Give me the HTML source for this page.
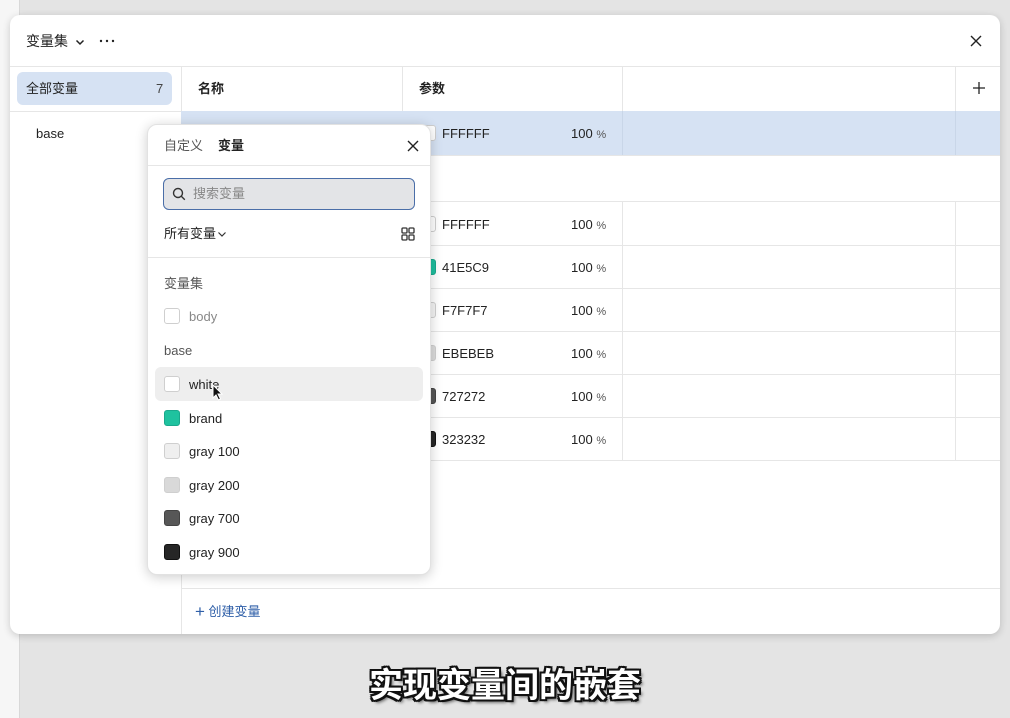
<!DOCTYPE html>
<html><head><meta charset="utf-8"><style>
*{box-sizing:border-box;margin:0;padding:0}
body{width:1010px;height:718px;overflow:hidden;background:#e4e4e4;font-family:"Liberation Sans","Noto Sans CJK SC",sans-serif;position:relative;color:#222}
.a{position:absolute}
.ruler{left:0;top:0;width:20px;height:718px;background:#f6f6f6;border-right:1px solid #d8d8d8}
.modal{left:10px;top:15px;width:990px;height:619px;background:#fff;border-radius:10px;box-shadow:0 2px 8px rgba(0,0,0,.18);overflow:hidden}
.t{font-size:13px;line-height:16px;white-space:nowrap}
.hl{background:#eeeeee}
.vl{width:1px;background:#e6e6e6}
.hr{height:1px;background:#e6e6e6}
.sw{width:16px;height:16px;border-radius:3px;border:1px solid #cfcfcf}
.pct{font-size:11px;color:#555}
.pop{left:147px;top:124px;width:284px;height:451px;background:#fff;border-radius:10px;box-shadow:0 2px 12px rgba(0,0,0,.2);border:1px solid #e2e2e2}
.sub{left:0;width:1010px;top:660px;text-align:center;font-size:34px;line-height:46px;color:#fff;font-family:"Noto Sans CJK SC",sans-serif;font-weight:bold;text-shadow:-2px -2px 0 #111,2px -2px 0 #111,-2px 2px 0 #111,2px 2px 0 #111,0 2px 0 #111,0 -2px 0 #111,2px 0 0 #111,-2px 0 0 #111,3px 3px 3px rgba(0,0,0,.6)}
</style></head><body>
<div class="a ruler"></div>
<div class="a modal">
  <div class="a t" style="left:16px;top:18px;font-size:14px">变量集</div>
  <svg class="a" style="left:64px;top:21px" width="12" height="12" viewBox="0 0 12 12"><path d="M2.5 4.5L6 8l3.5-3.5" stroke="#222" stroke-width="1.5" fill="none"/></svg>
  <svg class="a" style="left:89px;top:24px" width="16" height="4" viewBox="0 0 16 4"><circle cx="2" cy="2" r="1.2" fill="#222"/><circle cx="8" cy="2" r="1.2" fill="#222"/><circle cx="14" cy="2" r="1.2" fill="#222"/></svg>
  <svg class="a" style="left:959px;top:19px" width="14" height="14" viewBox="0 0 14 14"><path d="M2 2l10 10M12 2L2 12" stroke="#222" stroke-width="1.4"/></svg>
  <div class="a hr" style="left:0;top:51px;width:990px"></div>
  <div class="a" style="left:7px;top:57px;width:155px;height:33px;background:#d6e2f3;border-radius:6px"></div>
  <div class="a t" style="left:16px;top:66px">全部变量</div>
  <div class="a t" style="left:146px;top:66px;color:#444">7</div>
  <div class="a hr" style="left:0;top:96px;width:171px"></div>
  <div class="a t" style="left:26px;top:111px">base</div>
  <div class="a vl" style="left:171px;top:51px;height:568px"></div>
  <div class="a t" style="left:188px;top:66px;font-weight:bold">名称</div>
  <div class="a t" style="left:409px;top:66px;font-weight:bold">参数</div>
  <div class="a vl" style="left:392px;top:51px;height:45px"></div>
  <div class="a vl" style="left:612px;top:51px;height:45px"></div>
  <div class="a vl" style="left:945px;top:51px;height:45px"></div>
  <svg class="a" style="left:962px;top:66px" width="14" height="14" viewBox="0 0 14 14"><path d="M7 1v12M1 7h12" stroke="#222" stroke-width="1.3"/></svg>
  <div class="a hr" style="left:171px;top:96px;width:819px"></div>
  <div class="a" style="left:171px;top:96px;width:819px;height:44px;background:#d6e2f3"></div>
  <div class="a vl" style="left:612px;top:96px;height:44px;background:#c9d6e8"></div>
  <div class="a vl" style="left:945px;top:96px;height:44px;background:#c9d6e8"></div>
  <div class="a hr" style="left:171px;top:140px;width:819px"></div>
  <div class="a hr" style="left:171px;top:186px;width:819px"></div>
  <div class="a sw" style="left:410px;top:110px;background:#fff"></div>
  <div class="a t" style="left:432px;top:111px">FFFFFF</div>
  <div class="a t" style="left:561px;top:111px">100 <span class="pct">%</span></div>

  <div class="a sw" style="left:410px;top:201px;background:#fff"></div>
  <div class="a t" style="left:432px;top:202px">FFFFFF</div>
  <div class="a t" style="left:561px;top:202px">100 <span class="pct">%</span></div>
  <div class="a hr" style="left:171px;top:230px;width:819px"></div>
  <div class="a sw" style="left:410px;top:244px;background:#1fbf9f;border-color:#1aa88c"></div>
  <div class="a t" style="left:432px;top:245px">41E5C9</div>
  <div class="a t" style="left:561px;top:245px">100 <span class="pct">%</span></div>
  <div class="a hr" style="left:171px;top:273px;width:819px"></div>
  <div class="a sw" style="left:410px;top:287px;background:#f4f4f4"></div>
  <div class="a t" style="left:432px;top:288px">F7F7F7</div>
  <div class="a t" style="left:561px;top:288px">100 <span class="pct">%</span></div>
  <div class="a hr" style="left:171px;top:316px;width:819px"></div>
  <div class="a sw" style="left:410px;top:330px;background:#dcdcdc"></div>
  <div class="a t" style="left:432px;top:331px">EBEBEB</div>
  <div class="a t" style="left:561px;top:331px">100 <span class="pct">%</span></div>
  <div class="a hr" style="left:171px;top:359px;width:819px"></div>
  <div class="a sw" style="left:410px;top:373px;background:#555;border-color:#444"></div>
  <div class="a t" style="left:432px;top:374px">727272</div>
  <div class="a t" style="left:561px;top:374px">100 <span class="pct">%</span></div>
  <div class="a hr" style="left:171px;top:402px;width:819px"></div>
  <div class="a sw" style="left:410px;top:416px;background:#262626;border-color:#111"></div>
  <div class="a t" style="left:432px;top:417px">323232</div>
  <div class="a t" style="left:561px;top:417px">100 <span class="pct">%</span></div>
  <div class="a hr" style="left:171px;top:445px;width:819px"></div>
  <div class="a vl" style="left:612px;top:186px;height:259px"></div>
  <div class="a vl" style="left:945px;top:186px;height:259px"></div>
  <div class="a hr" style="left:171px;top:573px;width:819px"></div>
  <div class="a t" style="left:185px;top:588px;color:#2f5fa8"><span style="font-size:17px;position:relative;top:1px">+</span> 创建变量</div>
</div>
<div class="a pop">
  <div class="a t" style="left:16px;top:13px;color:#555">自定义</div>
  <div class="a t" style="left:70px;top:13px;font-weight:bold">变量</div>
  <svg class="a" style="left:258px;top:14px" width="14" height="14" viewBox="0 0 14 14"><path d="M2 2l10 10M12 2L2 12" stroke="#222" stroke-width="1.4"/></svg>
  <div class="a hr" style="left:0;top:40px;width:282px"></div>
  <div class="a" style="left:15px;top:53px;width:252px;height:32px;background:#e3e4e7;border:1.5px solid #4a6ea8;border-radius:6px"></div>
  <svg class="a" style="left:24px;top:62px" width="14" height="14" viewBox="0 0 14 14"><circle cx="6" cy="6" r="4.5" stroke="#333" stroke-width="1.4" fill="none"/><path d="M9.3 9.3l3.5 3.5" stroke="#333" stroke-width="1.4"/></svg>
  <div class="a t" style="left:45px;top:61px;color:#888">搜索变量</div>
  <div class="a t" style="left:16px;top:101px">所有变量</div>
  <svg class="a" style="left:69px;top:104px" width="10" height="10" viewBox="0 0 10 10"><path d="M1.5 3.5L5 7l3.5-3.5" stroke="#333" stroke-width="1.2" fill="none"/></svg>
  <svg class="a" style="left:253px;top:102px" width="14" height="14" viewBox="0 0 14 14"><g stroke="#333" stroke-width="1.3" fill="none"><rect x="1" y="1" width="5" height="5" rx="1"/><rect x="8" y="1" width="5" height="5" rx="1"/><rect x="1" y="8" width="5" height="5" rx="1"/><rect x="8" y="8" width="5" height="5" rx="1"/></g></svg>
  <div class="a hr" style="left:0;top:132px;width:282px"></div>
  <div class="a t" style="left:16px;top:151px;color:#555">变量集</div>
  <div class="a sw" style="left:16px;top:183px;background:#fff"></div>
  <div class="a t" style="left:41px;top:184px;color:#888">body</div>
  <div class="a t" style="left:16px;top:218px;color:#555">base</div>
  <div class="a hl" style="left:7px;top:242px;width:268px;height:34px;border-radius:6px"></div>
  <div class="a sw" style="left:16px;top:251px;background:#fff"></div>
  <div class="a t" style="left:41px;top:252px">white</div>
  <svg class="a" style="left:64px;top:259px" width="12" height="18" viewBox="0 0 12 18"><path d="M1 1v13l3-3 2.5 5 2-1-2.5-5h4z" fill="#111" stroke="#fff" stroke-width="1"/></svg>
  <div class="a sw" style="left:16px;top:285px;background:#1fc29f;border-color:#1aa88c"></div>
  <div class="a t" style="left:41px;top:286px">brand</div>
  <div class="a sw" style="left:16px;top:318px;background:#efefef"></div>
  <div class="a t" style="left:41px;top:319px">gray 100</div>
  <div class="a sw" style="left:16px;top:352px;background:#d9d9d9"></div>
  <div class="a t" style="left:41px;top:353px">gray 200</div>
  <div class="a sw" style="left:16px;top:385px;background:#575757;border-color:#444"></div>
  <div class="a t" style="left:41px;top:386px">gray 700</div>
  <div class="a sw" style="left:16px;top:419px;background:#262626;border-color:#111"></div>
  <div class="a t" style="left:41px;top:420px">gray 900</div>
</div>
<div class="a sub">实现变量间的嵌套</div>
</body></html>
